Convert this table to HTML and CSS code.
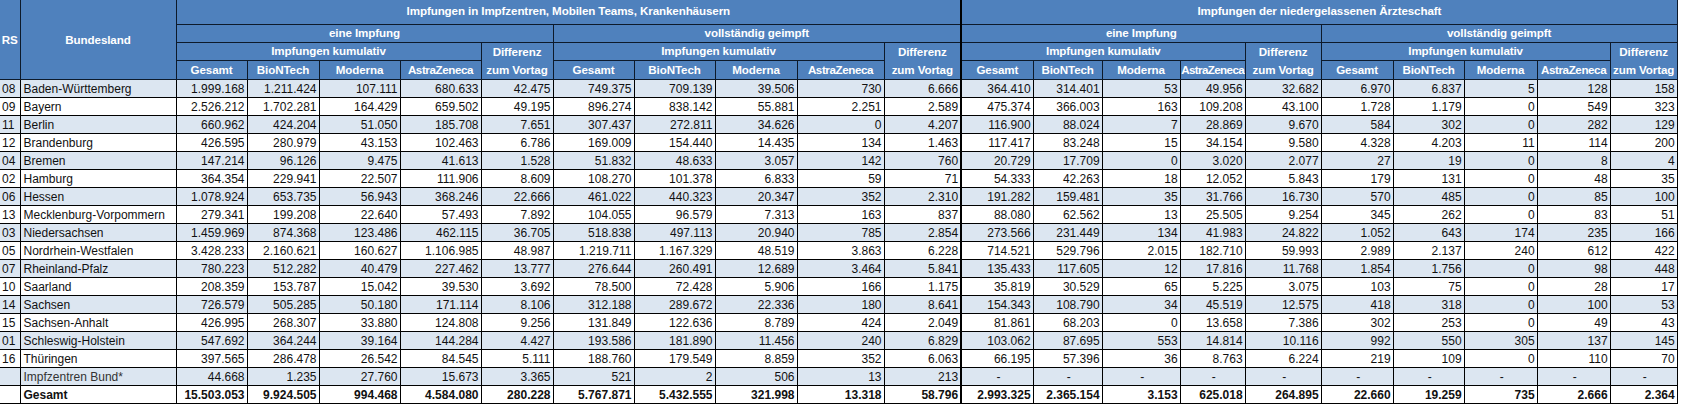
FILE: index.html
```html
<!DOCTYPE html>
<html lang="de">
<head>
<meta charset="utf-8">
<title>Impfungen</title>
<link rel="stylesheet" href="styles.css">
</head>
<body>
<table class="sheet">
<colgroup>
<col class="w20"><col class="w156">
<col class="w71"><col class="w72"><col class="w81"><col class="w81"><col class="w72">
<col class="w81"><col class="w81"><col class="w82"><col class="w87"><col class="w77">
<col class="w72"><col class="w69"><col class="w78"><col class="w65"><col class="w76">
<col class="w72"><col class="w71"><col class="w73"><col class="w73"><col class="w67">
</colgroup>
<thead>
<tr class="h1">
<th rowspan="4" class="mid first">RS</th>
<th rowspan="4" class="mid">Bundesland</th>
<th colspan="10" class="title">Impfungen in Impfzentren, Mobilen Teams, Krankenhäusern</th>
<th colspan="10" class="title sep">Impfungen der niedergelassenen Ärzteschaft</th>
</tr>
<tr class="h2">
<th colspan="5">eine Impfung</th>
<th colspan="5">vollständig geimpft</th>
<th colspan="5" class="sep">eine Impfung</th>
<th colspan="5">vollständig geimpft</th>
</tr>
<tr class="h3">
<th colspan="4">Impfungen kumulativ</th>
<th rowspan="2" class="diff">Differenz<br>zum Vortag</th>
<th colspan="4">Impfungen kumulativ</th>
<th rowspan="2" class="diff">Differenz<br>zum Vortag</th>
<th colspan="4" class="sep">Impfungen kumulativ</th>
<th rowspan="2" class="diff">Differenz<br>zum Vortag</th>
<th colspan="4">Impfungen kumulativ</th>
<th rowspan="2" class="diff">Differenz<br>zum Vortag</th>
</tr>
<tr class="h4">
<th>Gesamt</th><th>BioNTech</th><th>Moderna</th><th class="az">AstraZeneca</th>
<th>Gesamt</th><th>BioNTech</th><th>Moderna</th><th class="az">AstraZeneca</th>
<th class="sep">Gesamt</th><th>BioNTech</th><th>Moderna</th><th class="az tight">AstraZeneca</th>
<th>Gesamt</th><th>BioNTech</th><th>Moderna</th><th class="az">AstraZeneca</th>
</tr>
</thead>
<tbody>
<tr class="alt"><td class="rs">08</td><td class="land">Baden-Württemberg</td><td>1.999.168</td><td>1.211.424</td><td>107.111</td><td>680.633</td><td>42.475</td><td>749.375</td><td>709.139</td><td>39.506</td><td>730</td><td>6.666</td><td class="sep">364.410</td><td>314.401</td><td>53</td><td>49.956</td><td>32.682</td><td>6.970</td><td>6.837</td><td>5</td><td>128</td><td>158</td></tr>
<tr><td class="rs">09</td><td class="land">Bayern</td><td>2.526.212</td><td>1.702.281</td><td>164.429</td><td>659.502</td><td>49.195</td><td>896.274</td><td>838.142</td><td>55.881</td><td>2.251</td><td>2.589</td><td class="sep">475.374</td><td>366.003</td><td>163</td><td>109.208</td><td>43.100</td><td>1.728</td><td>1.179</td><td>0</td><td>549</td><td>323</td></tr>
<tr class="alt"><td class="rs">11</td><td class="land">Berlin</td><td>660.962</td><td>424.204</td><td>51.050</td><td>185.708</td><td>7.651</td><td>307.437</td><td>272.811</td><td>34.626</td><td>0</td><td>4.207</td><td class="sep">116.900</td><td>88.024</td><td>7</td><td>28.869</td><td>9.670</td><td>584</td><td>302</td><td>0</td><td>282</td><td>129</td></tr>
<tr><td class="rs">12</td><td class="land">Brandenburg</td><td>426.595</td><td>280.979</td><td>43.153</td><td>102.463</td><td>6.786</td><td>169.009</td><td>154.440</td><td>14.435</td><td>134</td><td>1.463</td><td class="sep">117.417</td><td>83.248</td><td>15</td><td>34.154</td><td>9.580</td><td>4.328</td><td>4.203</td><td>11</td><td>114</td><td>200</td></tr>
<tr class="alt"><td class="rs">04</td><td class="land">Bremen</td><td>147.214</td><td>96.126</td><td>9.475</td><td>41.613</td><td>1.528</td><td>51.832</td><td>48.633</td><td>3.057</td><td>142</td><td>760</td><td class="sep">20.729</td><td>17.709</td><td>0</td><td>3.020</td><td>2.077</td><td>27</td><td>19</td><td>0</td><td>8</td><td>4</td></tr>
<tr><td class="rs">02</td><td class="land">Hamburg</td><td>364.354</td><td>229.941</td><td>22.507</td><td>111.906</td><td>8.609</td><td>108.270</td><td>101.378</td><td>6.833</td><td>59</td><td>71</td><td class="sep">54.333</td><td>42.263</td><td>18</td><td>12.052</td><td>5.843</td><td>179</td><td>131</td><td>0</td><td>48</td><td>35</td></tr>
<tr class="alt"><td class="rs">06</td><td class="land">Hessen</td><td>1.078.924</td><td>653.735</td><td>56.943</td><td>368.246</td><td>22.666</td><td>461.022</td><td>440.323</td><td>20.347</td><td>352</td><td>2.310</td><td class="sep">191.282</td><td>159.481</td><td>35</td><td>31.766</td><td>16.730</td><td>570</td><td>485</td><td>0</td><td>85</td><td>100</td></tr>
<tr><td class="rs">13</td><td class="land">Mecklenburg-Vorpommern</td><td>279.341</td><td>199.208</td><td>22.640</td><td>57.493</td><td>7.892</td><td>104.055</td><td>96.579</td><td>7.313</td><td>163</td><td>837</td><td class="sep">88.080</td><td>62.562</td><td>13</td><td>25.505</td><td>9.254</td><td>345</td><td>262</td><td>0</td><td>83</td><td>51</td></tr>
<tr class="alt"><td class="rs">03</td><td class="land">Niedersachsen</td><td>1.459.969</td><td>874.368</td><td>123.486</td><td>462.115</td><td>36.705</td><td>518.838</td><td>497.113</td><td>20.940</td><td>785</td><td>2.854</td><td class="sep">273.566</td><td>231.449</td><td>134</td><td>41.983</td><td>24.822</td><td>1.052</td><td>643</td><td>174</td><td>235</td><td>166</td></tr>
<tr><td class="rs">05</td><td class="land">Nordrhein-Westfalen</td><td>3.428.233</td><td>2.160.621</td><td>160.627</td><td>1.106.985</td><td>48.987</td><td>1.219.711</td><td>1.167.329</td><td>48.519</td><td>3.863</td><td>6.228</td><td class="sep">714.521</td><td>529.796</td><td>2.015</td><td>182.710</td><td>59.993</td><td>2.989</td><td>2.137</td><td>240</td><td>612</td><td>422</td></tr>
<tr class="alt"><td class="rs">07</td><td class="land">Rheinland-Pfalz</td><td>780.223</td><td>512.282</td><td>40.479</td><td>227.462</td><td>13.777</td><td>276.644</td><td>260.491</td><td>12.689</td><td>3.464</td><td>5.841</td><td class="sep">135.433</td><td>117.605</td><td>12</td><td>17.816</td><td>11.768</td><td>1.854</td><td>1.756</td><td>0</td><td>98</td><td>448</td></tr>
<tr><td class="rs">10</td><td class="land">Saarland</td><td>208.359</td><td>153.787</td><td>15.042</td><td>39.530</td><td>3.692</td><td>78.500</td><td>72.428</td><td>5.906</td><td>166</td><td>1.175</td><td class="sep">35.819</td><td>30.529</td><td>65</td><td>5.225</td><td>3.075</td><td>103</td><td>75</td><td>0</td><td>28</td><td>17</td></tr>
<tr class="alt"><td class="rs">14</td><td class="land">Sachsen</td><td>726.579</td><td>505.285</td><td>50.180</td><td>171.114</td><td>8.106</td><td>312.188</td><td>289.672</td><td>22.336</td><td>180</td><td>8.641</td><td class="sep">154.343</td><td>108.790</td><td>34</td><td>45.519</td><td>12.575</td><td>418</td><td>318</td><td>0</td><td>100</td><td>53</td></tr>
<tr><td class="rs">15</td><td class="land">Sachsen-Anhalt</td><td>426.995</td><td>268.307</td><td>33.880</td><td>124.808</td><td>9.256</td><td>131.849</td><td>122.636</td><td>8.789</td><td>424</td><td>2.049</td><td class="sep">81.861</td><td>68.203</td><td>0</td><td>13.658</td><td>7.386</td><td>302</td><td>253</td><td>0</td><td>49</td><td>43</td></tr>
<tr class="alt"><td class="rs">01</td><td class="land">Schleswig-Holstein</td><td>547.692</td><td>364.244</td><td>39.164</td><td>144.284</td><td>4.427</td><td>193.586</td><td>181.890</td><td>11.456</td><td>240</td><td>6.829</td><td class="sep">103.062</td><td>87.695</td><td>553</td><td>14.814</td><td>10.116</td><td>992</td><td>550</td><td>305</td><td>137</td><td>145</td></tr>
<tr><td class="rs">16</td><td class="land">Thüringen</td><td>397.565</td><td>286.478</td><td>26.542</td><td>84.545</td><td>5.111</td><td>188.760</td><td>179.549</td><td>8.859</td><td>352</td><td>6.063</td><td class="sep">66.195</td><td>57.396</td><td>36</td><td>8.763</td><td>6.224</td><td>219</td><td>109</td><td>0</td><td>110</td><td>70</td></tr>
<tr class="alt bund"><td class="rs"></td><td class="land">Impfzentren Bund*</td><td>44.668</td><td>1.235</td><td>27.760</td><td>15.673</td><td>3.365</td><td>521</td><td>2</td><td>506</td><td>13</td><td>213</td><td class="sep dash">-</td><td class="dash">-</td><td class="dash">-</td><td class="dash">-</td><td class="dash">-</td><td class="dash">-</td><td class="dash">-</td><td class="dash">-</td><td class="dash">-</td><td class="dash">-</td></tr>
<tr class="total"><td class="rs"></td><td class="land">Gesamt</td><td>15.503.053</td><td>9.924.505</td><td>994.468</td><td>4.584.080</td><td>280.228</td><td>5.767.871</td><td>5.432.555</td><td>321.998</td><td>13.318</td><td>58.796</td><td class="sep">2.993.325</td><td>2.365.154</td><td>3.153</td><td>625.018</td><td>264.895</td><td>22.660</td><td>19.259</td><td>735</td><td>2.666</td><td>2.364</td></tr>
</tbody>
</table>
</body>
</html>
```

FILE: styles.css
```css
html, body {
  margin: 0;
  padding: 0;
  background: #ffffff;
}

.sheet {
  border-collapse: collapse;
  table-layout: fixed;
  width: 1677px;
  font-family: "Liberation Sans", Arial, sans-serif;
  font-size: 12px;
  color: #111;
}

.w20 { width: 20px; }
.w156 { width: 156px; }
.w65 { width: 65px; }
.w67 { width: 67px; }
.w69 { width: 69px; }
.w71 { width: 71px; }
.w72 { width: 72px; }
.w73 { width: 73px; }
.w76 { width: 76px; }
.w77 { width: 77px; }
.w78 { width: 78px; }
.w81 { width: 81px; }
.w82 { width: 82px; }
.w87 { width: 87px; }

.sheet th {
  background: #4f81bd;
  color: #ffffff;
  font-weight: bold;
  font-size: 11.6px;
  letter-spacing: -0.1px;
  border: 1px solid #0d1a2b;
  padding: 0 0 1px;
  line-height: 16px;
  vertical-align: bottom;
  text-align: center;
  white-space: nowrap;
  overflow: hidden;
}

.sheet th.first { border-left: none; }

.sheet thead tr.h1 th { border-top: none; }

.sheet th.mid { vertical-align: middle; padding-top: 2px; }
.sheet th.title { vertical-align: middle; padding-bottom: 1px; }
.sheet th.diff { line-height: 18px; padding-bottom: 0; }
.sheet th.az { letter-spacing: -0.4px; }
.sheet th.tight { letter-spacing: -0.6px; }

.h1 { height: 24px; }
.h2, .h3, .h4 { height: 18px; }

.sheet td {
  height: 17px;
  padding: 0 2px 0 2px;
  border: 1px solid #000;
  line-height: 16px;
  vertical-align: bottom;
  text-align: right;
  white-space: nowrap;
  overflow: hidden;
}

.sheet td.rs { text-align: left; border-left: none; padding-left: 2px; }
.sheet td.land { text-align: left; padding-left: 3px; }
.sheet td.dash { text-align: center; padding: 0 2px 0 4px; }

.sheet .sep { border-left: 2px solid #000; }

.sheet tr.alt td { background: #dce6f1; }
.sheet tr.bund td.land { color: #333; }

.sheet tr.total td {
  font-weight: bold;
  border-bottom: 3px double #000;
}
```
